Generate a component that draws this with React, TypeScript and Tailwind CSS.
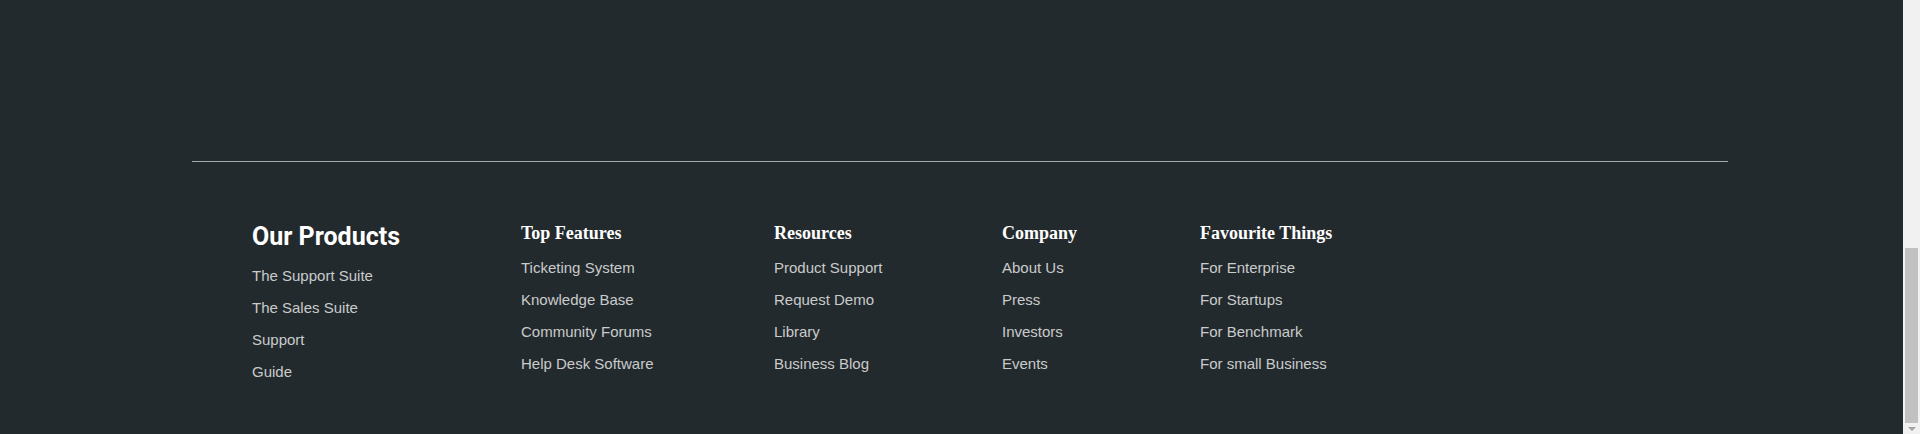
const columns = [
  {
    title: "Top Features",
    width: "w-[253px]",
    links: ["Ticketing System", "Knowledge Base", "Community Forums", "Help Desk Software"],
  },
  {
    title: "Resources",
    width: "w-[228px]",
    links: ["Product Support", "Request Demo", "Library", "Business Blog"],
  },
  {
    title: "Company",
    width: "w-[198px]",
    links: ["About Us", "Press", "Investors", "Events"],
  },
  {
    title: "Favourite Things",
    width: "w-[240px]",
    links: ["For Enterprise", "For Startups", "For Benchmark", "For small Business"],
  },
];

const products = ["The Support Suite", "The Sales Suite", "Support", "Guide"];

const LinkList = ({ links }: { links: string[] }) => (
  <ul className="mt-[8px] font-['Liberation_Sans',Arial,sans-serif] text-[15px] leading-[32px] text-[#c9cbcc]">
    {links.map((l) => (
      <li key={l}>
        <a href="#" className="hover:text-white">
          {l}
        </a>
      </li>
    ))}
  </ul>
);

const Scrollbar = () => (
  <div className="flex h-full w-[17px] shrink-0 flex-col bg-[#f1f1f1]">
    <div className="h-[248px]" />
    <div className="mx-[2px] h-[175px] bg-[#c1c1c1]" />
    <div className="flex flex-1 items-center justify-center">
      <div className="h-0 w-0 border-x-[4px] border-t-[4px] border-x-transparent border-t-[#a3a3a3]" />
    </div>
  </div>
);

export default function App() {
  return (
    <div className="flex h-[434px] w-full overflow-hidden bg-[#232a2d]">
      <footer className="flex-1 pt-[161px]">
        <div className="ml-[192px] w-[1536px]">
          <div className="h-px bg-[#a3a7a9]" />
          <div className="flex items-start pl-[60px] pt-[60px]">
            <div className="w-[269px]">
              <h2 className="font-['Roboto',sans-serif] text-[25px] font-bold leading-[30px] text-white">
                Our Products
              </h2>
              <LinkList links={products} />
            </div>
            {columns.map((c) => (
              <div key={c.title} className={c.width}>
                <h3 className="font-['Liberation_Serif','Times_New_Roman',serif] text-[18px] font-bold leading-[22px] text-white">
                  {c.title}
                </h3>
                <LinkList links={c.links} />
              </div>
            ))}
          </div>
        </div>
      </footer>
      <Scrollbar />
    </div>
  );
}
